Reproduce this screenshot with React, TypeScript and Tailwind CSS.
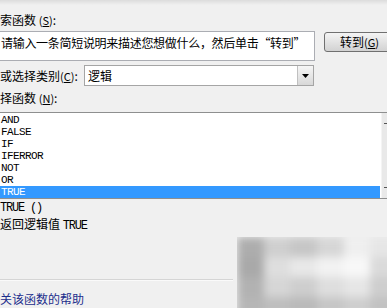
import React from "react";

const cjk = "font-['Noto_Sans_CJK_SC','Noto_Sans',sans-serif]";
const mono = "font-['Liberation_Mono','Noto_Sans_CJK_SC',monospace]";

function Key({ k }: { k: string }) {
  return (
    <span className="text-[11px]">
      (<span className="underline">{k}</span>)
    </span>
  );
}

const items = ["AND", "FALSE", "IF", "IFERROR", "NOT", "OR", "TRUE"];

const cells = [
  "bg-[#adadad]", "bg-[#cfcfcf]", "bg-[#c6c6c6]", "bg-[#d6d6d6]", "bg-[#efefef]", "bg-[#e6e6e6]",
  "bg-[#a9a9a9]", "bg-[#dedede]", "bg-[#e8e8e8]", "bg-[#f2f2f2]", "bg-[#f8f8f8]", "bg-[#dadada]",
  "bg-[#b2b2b2]", "bg-[#d6d6d6]", "bg-[#cecece]", "bg-[#dedede]", "bg-[#e6e6e6]", "bg-[#cecece]",
  "bg-[#b6b6b6]", "bg-[#bebebe]", "bg-[#bababa]", "bg-[#c6c6c6]", "bg-[#cecece]", "bg-[#c2c2c2]",
];

export default function App() {
  return (
    <div className={`relative w-[387px] h-[308px] overflow-hidden bg-[#f0f0f0] text-[#000] ${cjk}`}>
      <div className="h-[5px] bg-gradient-to-b from-[#dcdcdc] to-[#f0f0f0]" />
      <div className="h-[26px] pt-[7px] text-[12px] leading-[16px]">
        索函数 <Key k="S" />:
      </div>
      <div className="flex h-[30px]">
        <div className="w-[315px] h-[30px] shrink-0 bg-white border border-l-0 border-[#abadb3] pt-[3px] pl-[1px] text-[12px] leading-[16px] tracking-[-0.3px] whitespace-nowrap">
          请输入一条简短说明来描述您想做什么，然后单击“转到”
        </div>
        <div className="ml-[9px] mt-[1px] h-[20px] w-[72px] shrink-0 rounded-[3px] border border-[#707070] bg-gradient-to-b from-[#f4f4f4] to-[#d2d2d2] flex items-center pl-[15px] text-[12px] leading-[16px] whitespace-nowrap">
          转到 <Key k="G" />
        </div>
      </div>
      <div className="flex h-[25px] items-end">
        <div className="w-[84px] h-[21px] flex items-center text-[12px] leading-[16px] whitespace-nowrap">
          或选择类别 <Key k="C" />:
        </div>
        <div className="w-[230px] h-[21px] bg-white border border-[#a5a5a5] flex items-center">
          <div className="flex-1 pl-[3px] text-[12px] leading-[16px]">逻辑</div>
          <div className="w-[16px] h-[19px] border-l border-[#c0c0c0] bg-gradient-to-b from-[#f6f6f6] to-[#d8d8d8] flex items-center justify-center">
            <svg width="7" height="4" viewBox="0 0 7 4">
              <path d="M0 0 H7 L3.5 4 Z" fill="#000" />
            </svg>
          </div>
        </div>
      </div>
      <div className="h-[26px] pt-[4px] text-[12px] leading-[16px]">
        择函数 <Key k="N" />:
      </div>
      <div className="relative h-[87px] bg-white border-y border-[#8e8f8f] pt-[1px]">
        {items.map((it) => (
          <div
            key={it}
            className={`h-[12px] w-[380px] leading-[12px] pl-[1px] text-[11px] tracking-[-0.6px] ${mono} ${
              it === "TRUE" ? "bg-[#3399ff] text-white" : "text-black"
            }`}
          >
            {it}
          </div>
        ))}
        <div className="absolute right-0 top-0 bottom-0 w-[6px] bg-[#e9e9e9] border-l border-[#f4f4f4]">
          <div className="mt-[10px] ml-[2px] w-[3px] h-[1px] bg-[#555]" />
          <div className="mt-[63px] ml-[2px] w-[3px] h-[1px] bg-[#555]" />
        </div>
      </div>
      <div className={`mt-[1px] h-[16px] leading-[16px] text-[12px] tracking-[-1.2px] ${mono}`}>TRUE ()</div>
      <div className="h-[16px] leading-[16px] text-[12px] whitespace-nowrap">
        返回逻辑值 <span className={`text-[12px] tracking-[-1.2px] ${mono}`}>TRUE</span>
      </div>
      <div className="mt-[47px] w-[233px] h-[1px] bg-[#d5d5d5]" />
      <div className="w-[233px] h-[1px] bg-[#fafafa]" />
      <div className="mt-[10px] h-[16px] leading-[16px] text-[12px] text-[#1c2e8c] whitespace-nowrap">关该函数的帮助</div>

      <div className="absolute left-[237px] top-[237px] w-[150px] h-[71px] overflow-hidden">
        <div className="grid grid-cols-6 grid-rows-4 w-[160px] h-[80px] blur-[4px]">
          {cells.map((c, i) => (
            <div key={i} className={c} />
          ))}
        </div>
      </div>
    </div>
  );
}
